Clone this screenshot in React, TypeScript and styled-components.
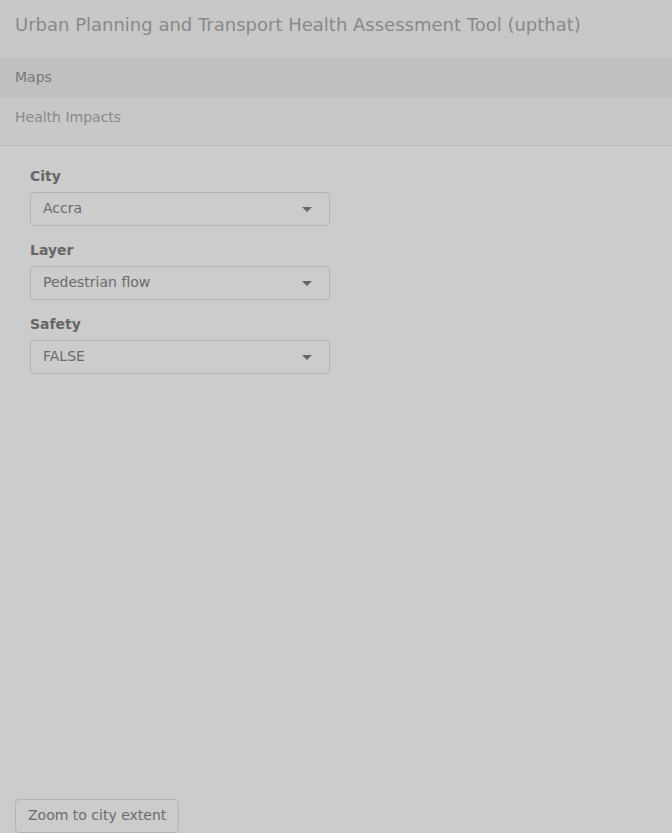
import React from "react";
import styled, { createGlobalStyle } from "styled-components";

const GlobalStyle = createGlobalStyle`
  html, body { margin: 0; padding: 0; }
  body {
    background: #cccccc;
    font-family: "DejaVu Sans", "Liberation Sans", sans-serif;
    font-size: 14px;
    line-height: 1.42857;
    color: #666666;
  }
  * { box-sizing: border-box; }
`;

const Page = styled.div`
  min-height: 100vh;
  display: flex;
  flex-direction: column;
`;

const Navbar = styled.nav`
  background: #c8c8c8;
  border-bottom: 1px solid #bcbcbc;
  margin-bottom: 20px;
`;

const NavHeader = styled.div`
  height: 50px;
  padding: 15px;
`;

const Brand = styled.span`
  display: block;
  font-size: 18px;
  line-height: 20px;
  color: #888888;
`;

const NavList = styled.ul`
  list-style: none;
  margin: 8px 0 7px;
  padding: 0;
`;

const NavItem = styled.li<{ $active?: boolean }>`
  padding: 9px 15px 11px;
  line-height: 20px;
  font-size: 14px;
  background: ${(p) => (p.$active ? "#c0c0c0" : "transparent")};
  color: ${(p) => (p.$active ? "#777777" : "#888888")};
`;

const Content = styled.main`
  flex: 1;
  padding: 0 30px;
`;

const Panel = styled.div`
  width: 300px;
`;

const FormGroup = styled.div`
  margin-bottom: 14px;
`;

const Label = styled.label`
  display: block;
  font-weight: bold;
  line-height: 20px;
  margin-bottom: 6px;
  color: #666666;
`;

const SelectBox = styled.div`
  height: 34px;
  border: 1px solid #b3b3b3;
  border-radius: 4px;
  padding: 0 17px 0 12px;
  display: flex;
  align-items: center;
  justify-content: space-between;
  color: #6b6b6b;
  background: #cccccc;
`;

const Caret = styled.span`
  width: 0;
  height: 0;
  border-style: solid;
  border-width: 5px 5px 0 5px;
  border-color: #666666 transparent transparent transparent;
  margin-top: 1px;
`;

const Footer = styled.div`
  padding: 0 15px;
  display: flex;
`;

const Button = styled.button`
  font-family: inherit;
  font-size: 14px;
  line-height: 20px;
  padding: 5px 12px 7px;
  border: 1px solid #b3b3b3;
  border-radius: 4px;
  background: #cccccc;
  color: #6b6b6b;
`;

const fields = [
  { label: "City", value: "Accra" },
  { label: "Layer", value: "Pedestrian flow" },
  { label: "Safety", value: "FALSE" },
];

export default function App() {
  return (
    <Page>
      <GlobalStyle />
      <Navbar>
        <NavHeader>
          <Brand>Urban Planning and Transport Health Assessment Tool (upthat)</Brand>
        </NavHeader>
        <NavList>
          <NavItem $active>Maps</NavItem>
          <NavItem>Health Impacts</NavItem>
        </NavList>
      </Navbar>
      <Content>
        <Panel>
          {fields.map((f) => (
            <FormGroup key={f.label}>
              <Label>{f.label}</Label>
              <SelectBox>
                <span>{f.value}</span>
                <Caret />
              </SelectBox>
            </FormGroup>
          ))}
        </Panel>
      </Content>
      <Footer>
        <Button>Zoom to city extent</Button>
      </Footer>
    </Page>
  );
}
